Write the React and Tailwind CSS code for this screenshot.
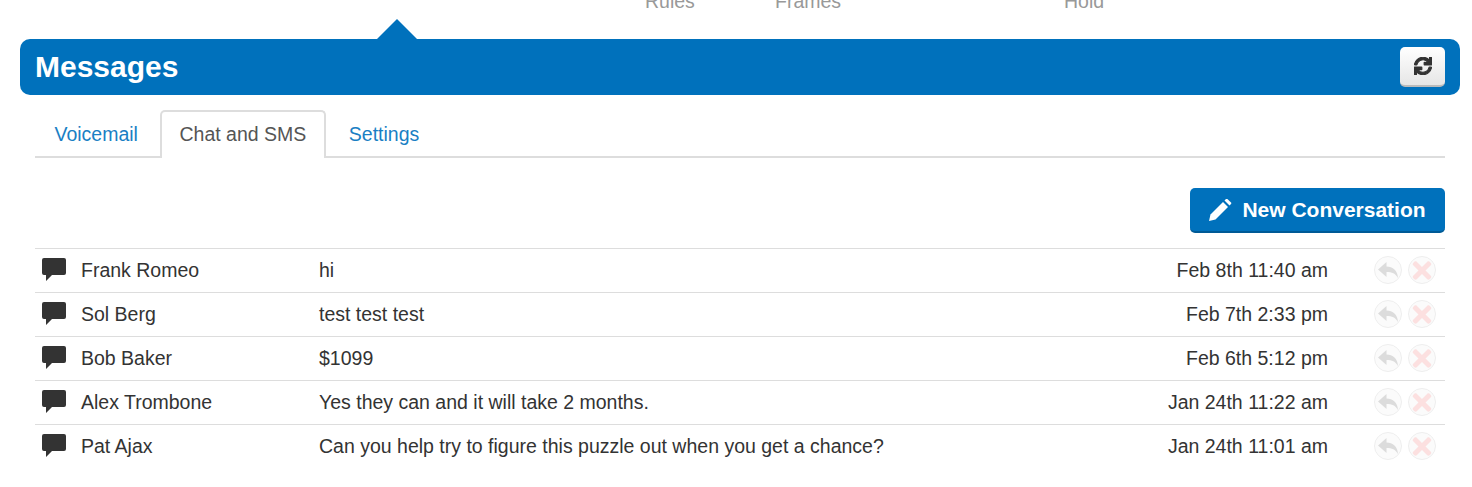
import { FaSync, FaTimes } from "react-icons/fa";

const rows = [
  { name: "Frank Romeo", text: "hi", date: "Feb 8th 11:40 am" },
  { name: "Sol Berg", text: "test test test", date: "Feb 7th 2:33 pm" },
  { name: "Bob Baker", text: "$1099", date: "Feb 6th 5:12 pm" },
  { name: "Alex Trombone", text: "Yes they can and it will take 2 months.", date: "Jan 24th 11:22 am" },
  { name: "Pat Ajax", text: "Can you help try to figure this puzzle out when you get a chance?", date: "Jan 24th 11:01 am" },
];

function ChatIcon() {
  return (
    <svg width="24" height="23" viewBox="0 0 24 23" className="shrink-0">
      <path
        d="M2 0h20a2 2 0 0 1 2 2v13a2 2 0 0 1-2 2H10l-6 6V17H2a2 2 0 0 1-2-2V2a2 2 0 0 1 2-2z"
        fill="#333333"
      />
    </svg>
  );
}

function PencilIcon() {
  return (
    <svg width="23" height="22" viewBox="0 0 23 22" className="shrink-0" fill="white">
      <path d="M0 22l1.5-6.5L14 3l5 5L6.5 20.5z" />
      <path d="M15.5 1.5L17 0a1 1 0 0 1 1.4 0l3.6 3.6a1 1 0 0 1 0 1.4l-1.5 1.5z" />
    </svg>
  );
}

function ReplyIcon() {
  return (
    <svg width="20" height="16" viewBox="0 0 20 16" fill="#555555">
      <path d="M0 7.5L8.5 0v4.5C15 4.5 19.5 8.5 20 16c-2.5-4.5-6-6-11.5-6v5z" />
    </svg>
  );
}

function Row({ name, text, date }) {
  return (
    <div className="flex h-[44px] items-center border-t border-[#dddddd] text-[19.5px] text-[#333333]">
      <div className="mb-[2px] ml-[7px] w-[39px]">
        <ChatIcon />
      </div>
      <div className="w-[238px]">{name}</div>
      <div className="flex-1">{text}</div>
      <div>{date}</div>
      <div className="mb-[1px] ml-[46px] mr-[9px] flex gap-[6px] opacity-20 blur-[0.5px]">
        <span className="flex h-[28px] w-[28px] items-center justify-center rounded-full border border-[#aaaaaa] bg-[#eeeeee]">
          <ReplyIcon />
        </span>
        <span className="flex h-[28px] w-[28px] items-center justify-center rounded-full border border-[#aaaaaa] bg-[#eeeeee]">
          <FaTimes className="text-[27px] text-[#f26a6a]" />
        </span>
      </div>
    </div>
  );
}

export default function App() {
  return (
    <div className="h-[487px] overflow-hidden bg-white font-['Liberation_Sans',Arial,sans-serif]">
      {/* cut off nav above the panel */}
      <div className="relative h-[39px]">
        <div className="flex h-[13px] items-end overflow-hidden pl-[645px] text-[19.5px] leading-[24px] text-[#999999]">
          <span className="w-[130px] shrink-0">Rules</span>
          <span className="w-[289px] shrink-0">Frames</span>
          <span>Hold</span>
        </div>
        <div className="absolute bottom-0 left-[377px] h-0 w-0 border-x-[20px] border-b-[20px] border-x-transparent border-b-[#0071bc]" />
      </div>

      <div className="ml-[20px] mr-[12px]">
        <div className="flex h-[56px] items-center justify-between rounded-[10px] bg-[#0071bc] px-[15px]">
          <h1 className="mb-[2px] text-[30px] font-bold text-white">Messages</h1>
          <button
            type="button"
            className="flex h-[40px] w-[45px] items-center justify-center rounded-[5px] border-b-2 border-[#bbbbbb] bg-gradient-to-b from-white to-[#e6e6e6] text-[#333333]"
          >
            <FaSync className="text-[18px]" stroke="currentColor" strokeWidth={30} />
          </button>
        </div>

        <div className="mx-[15px]">
          <div className="mt-[15px] flex h-[48px] border-b-2 border-[#dddddd] text-[19.5px]">
            <a className="mr-[3px] px-[19.5px] pt-[10px] text-[#1a7fc4]">Voicemail</a>
            <a className="h-[48px] rounded-t-[5px] border-2 border-b-0 border-[#dddddd] bg-white pl-[17px] pr-[18px] pt-[8px] text-[#555555]">
              Chat and SMS
            </a>
            <a className="ml-[3px] px-[19.5px] pt-[10px] text-[#1a7fc4]">Settings</a>
          </div>

          <div className="mt-[30px] flex justify-end">
            <button
              type="button"
              className="flex h-[45px] w-[255px] items-center justify-center gap-[10px] rounded-[5px] border-b-2 border-[#005a96] bg-[#0071bc] text-[21px] font-bold text-white"
            >
              <PencilIcon />
              New Conversation
            </button>
          </div>

          <div className="mt-[15px]">
            {rows.map((row) => (
              <Row key={row.name} {...row} />
            ))}
          </div>
        </div>
      </div>
    </div>
  );
}
